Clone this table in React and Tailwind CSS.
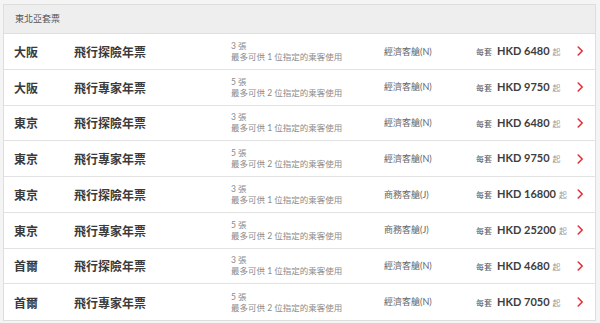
import React from "react";

const rows = [
  ["大阪", "飛行探險年票", "3", "1", "經濟客艙(N)", "6480"],
  ["大阪", "飛行專家年票", "5", "2", "經濟客艙(N)", "9750"],
  ["東京", "飛行探險年票", "3", "1", "經濟客艙(N)", "6480"],
  ["東京", "飛行專家年票", "5", "2", "經濟客艙(N)", "9750"],
  ["東京", "飛行探險年票", "3", "1", "商務客艙(J)", "16800"],
  ["東京", "飛行專家年票", "5", "2", "商務客艙(J)", "25200"],
  ["首爾", "飛行探險年票", "3", "1", "經濟客艙(N)", "4680"],
  ["首爾", "飛行專家年票", "5", "2", "經濟客艙(N)", "7050"],
];

function Chevron() {
  return (
    <svg width="7" height="10" viewBox="0 0 7 10" className="block">
      <polyline points="1.2,1 5.2,5 1.2,9" fill="none" stroke="#e2323a" strokeWidth="1.6" strokeLinecap="round" strokeLinejoin="round" />
    </svg>
  );
}

export default function App() {
  return (
    <div
      className="w-[600px] h-[323px] bg-[#f4f4f4] pt-[4px] pl-[3px] pr-[4px] overflow-hidden"
      style={{ fontFamily: 'Lato, "Noto Sans CJK TC", "Noto Sans", sans-serif' }}
    >
      <div className="border border-[#dedede] bg-white">
        <div className="h-[29px] bg-[#eeeeee] border-b border-[#dedede] flex items-center pl-[11px] text-[9px] text-[#555]">
          東北亞套票
        </div>
        {rows.map((r, i) => (
          <div
            key={i}
            className={`h-[35.75px] flex items-center pl-[10px] whitespace-nowrap ${i < rows.length - 1 ? "border-b border-[#e2e2e2]" : ""}`}
          >
            <div className="w-[60px] text-[12px] font-bold text-[#3a3a3a] pt-[3px]">{r[0]}</div>
            <div className="w-[157px] text-[12px] font-bold text-[#3a3a3a] pt-[3px]">{r[1]}</div>
            <div className="w-[153px] text-[8.5px] text-[#8a8a8a] leading-[11px] pt-[1px]">
              <div>{r[2]} 張</div>
              <div>最多可供 {r[3]} 位指定的乘客使用</div>
            </div>
            <div className="w-[92px] text-[9px] text-[#666]">{r[4]}</div>
            <div className="w-[101px] flex items-baseline">
              <span className="text-[8px] text-[#555] mr-[5px]">每套</span>
              <span className="text-[11px] font-bold text-[#3d3d3d]">HKD {r[5]}</span>
              <span className="text-[8px] text-[#999] ml-[3px]">起</span>
            </div>
            <Chevron />
          </div>
        ))}
      </div>
    </div>
  );
}
